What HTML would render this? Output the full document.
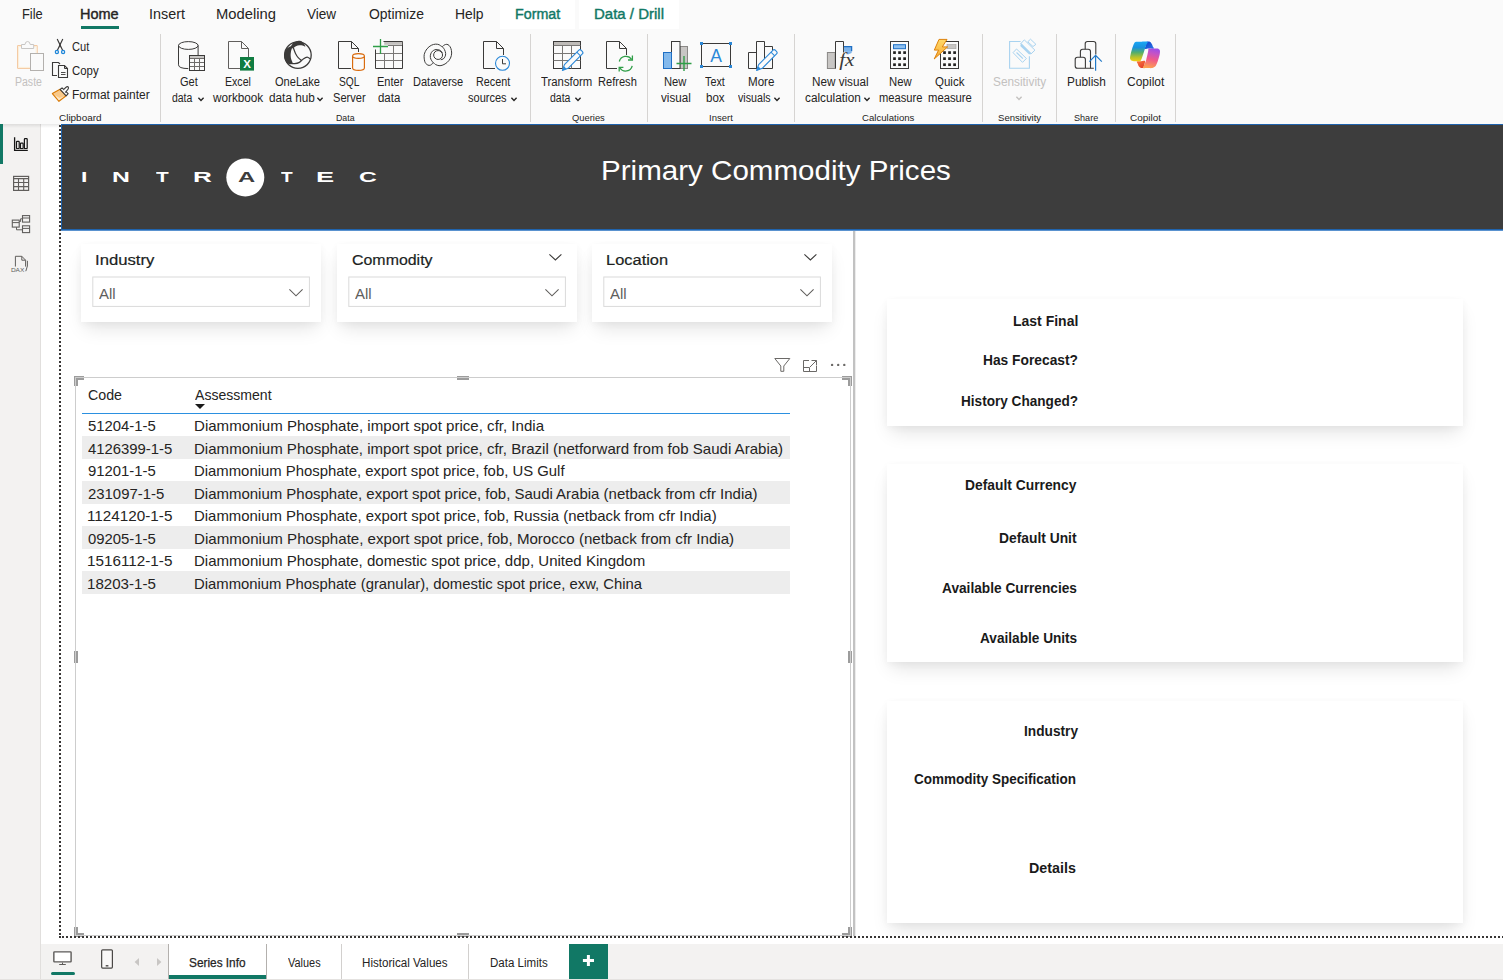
<!DOCTYPE html>
<html lang="en"><head><meta charset="utf-8"><title>Primary Commodity Prices - Power BI Desktop</title>
<style>
html,body{margin:0;padding:0}
body{width:1503px;height:980px;position:relative;overflow:hidden;background:#fff;font-family:"Liberation Sans",sans-serif;color:#252423}
.a{position:absolute}
.t{position:absolute;white-space:pre;line-height:1;transform-origin:0 50%;color:#252423}
svg{position:absolute;overflow:visible}
.sep{position:absolute;width:1px;top:34px;height:88px;background:#d6d4d2}
.card{position:absolute;background:#fff;box-shadow:0 10px 18px -4px rgba(0,0,0,.115),0 2px 8px rgba(0,0,0,.04)}
.dd{position:absolute;border:1px solid #e4e4e4;background:#fff;box-sizing:border-box}
.row{position:absolute;left:82px;width:708px;height:22px;background:#ededed}
.h{position:absolute;background:#a6a6a6}
</style></head><body>
<div class="a" style="left:0;top:0;width:1503px;height:124px;background:#fafafa"></div>
<div class="a" style="left:500px;top:0;width:75px;height:29px;background:#fff"></div>
<div class="a" style="left:579px;top:0;width:100px;height:29px;background:#fff"></div>
<div class="a" style="left:81px;top:26px;width:38px;height:3px;background:#117865"></div>
<div class="a" style="left:0;top:124px;width:41px;height:856px;background:#f3f2f1;border-right:1px solid #e1dfdd;box-sizing:border-box"></div>
<div class="a" style="left:0;top:124px;width:60px;height:4px;background:linear-gradient(rgba(0,0,0,.09),rgba(0,0,0,0))"></div>
<div class="a" style="left:0;top:124px;width:3px;height:40px;background:#117865"></div>
<div class="a" style="left:41px;top:944px;width:1462px;height:36px;background:#f3f2f1"></div>
<div class="a" style="left:0;top:979px;width:1503px;height:1px;background:#e4e2e0"></div>
<div class="a" style="left:61px;top:124px;width:1442px;height:106px;background:#3d3d3d;border:1px solid #1f63ad;border-right:0;box-sizing:border-box"></div>
<div class="a" style="left:61px;top:230px;width:1442px;height:1px;background:#5a92cf"></div>
<div class="a" style="left:853px;top:231px;width:2px;height:705px;background:#c2c2c2;border-right:1px solid #ececec"></div>
<span class="t" style="left:22.08px;top:7.15px;font-size:14px;transform:scaleX(0.9186);">File</span>
<span class="t" style="left:80.37px;top:7.15px;font-size:14px;transform:scaleX(1.0340);-webkit-text-stroke:.4px;">Home</span>
<span class="t" style="left:148.97px;top:7.15px;font-size:14px;transform:scaleX(1.0257);">Insert</span>
<span class="t" style="left:215.95px;top:7.15px;font-size:14px;transform:scaleX(1.0540);">Modeling</span>
<span class="t" style="left:307.00px;top:7.15px;font-size:14px;transform:scaleX(0.9683);">View</span>
<span class="t" style="left:368.70px;top:7.15px;font-size:14px;transform:scaleX(0.9937);">Optimize</span>
<span class="t" style="left:455.41px;top:7.15px;font-size:14px;transform:scaleX(0.9926);">Help</span>
<span class="t" style="left:514.58px;top:7.15px;font-size:14px;transform:scaleX(1.0196);color:#117865;-webkit-text-stroke:.4px #117865;">Format</span>
<span class="t" style="left:593.53px;top:7.15px;font-size:14px;transform:scaleX(1.0711);color:#117865;-webkit-text-stroke:.4px #117865;">Data / Drill</span>
<div class="sep" style="left:160px"></div><div class="sep" style="left:530px"></div><div class="sep" style="left:647px"></div><div class="sep" style="left:794px"></div><div class="sep" style="left:982px"></div><div class="sep" style="left:1056px"></div><div class="sep" style="left:1115px"></div><div class="sep" style="left:1175px"></div><span class="t" style="left:14.70px;top:75.84px;font-size:12px;transform:scaleX(0.8771);color:#c3c1bf;">Paste</span>
<span class="t" style="left:72.40px;top:40.84px;font-size:12px;transform:scaleX(0.9256);">Cut</span>
<span class="t" style="left:72.40px;top:64.84px;font-size:12px;transform:scaleX(0.9495);">Copy</span>
<span class="t" style="left:72.40px;top:88.84px;font-size:12px;transform:scaleX(0.9957);">Format painter</span>
<span class="t" style="left:58.80px;top:113.04px;font-size:9.4px;transform:scaleX(1.0598);">Clipboard</span>
<span class="t" style="left:180.20px;top:75.84px;font-size:12px;transform:scaleX(0.9196);">Get</span>
<span class="t" style="left:172.00px;top:91.84px;font-size:12px;transform:scaleX(0.8699);">data</span>
<span class="t" style="left:225.20px;top:75.84px;font-size:12px;transform:scaleX(0.8822);">Excel</span>
<span class="t" style="left:212.58px;top:91.84px;font-size:12px;transform:scaleX(0.9783);">workbook</span>
<span class="t" style="left:275.00px;top:75.84px;font-size:12px;transform:scaleX(0.9239);">OneLake</span>
<span class="t" style="left:268.80px;top:91.84px;font-size:12px;transform:scaleX(0.9822);">data hub</span>
<span class="t" style="left:339.30px;top:75.84px;font-size:12px;transform:scaleX(0.8505);">SQL</span>
<span class="t" style="left:333.30px;top:91.84px;font-size:12px;transform:scaleX(0.9223);">Server</span>
<span class="t" style="left:376.60px;top:75.84px;font-size:12px;transform:scaleX(0.9168);">Enter</span>
<span class="t" style="left:377.90px;top:91.84px;font-size:12px;transform:scaleX(0.9543);">data</span>
<span class="t" style="left:412.50px;top:75.84px;font-size:12px;transform:scaleX(0.9179);">Dataverse</span>
<span class="t" style="left:476.40px;top:75.84px;font-size:12px;transform:scaleX(0.8995);">Recent</span>
<span class="t" style="left:468.40px;top:91.84px;font-size:12px;transform:scaleX(0.9187);">sources</span>
<span class="t" style="left:336.00px;top:113.04px;font-size:9.4px;transform:scaleX(0.9374);">Data</span>
<span class="t" style="left:541.40px;top:75.84px;font-size:12px;transform:scaleX(0.9459);">Transform</span>
<span class="t" style="left:549.80px;top:91.84px;font-size:12px;transform:scaleX(0.8741);">data</span>
<span class="t" style="left:598.20px;top:75.84px;font-size:12px;transform:scaleX(0.9240);">Refresh</span>
<span class="t" style="left:572.20px;top:113.04px;font-size:9.4px;transform:scaleX(0.9988);">Queries</span>
<span class="t" style="left:664.40px;top:75.84px;font-size:12px;transform:scaleX(0.9326);">New</span>
<span class="t" style="left:661.00px;top:91.84px;font-size:12px;transform:scaleX(0.9696);">visual</span>
<span class="t" style="left:705.40px;top:75.84px;font-size:12px;transform:scaleX(0.8997);">Text</span>
<span class="t" style="left:706.30px;top:91.84px;font-size:12px;transform:scaleX(0.9614);">box</span>
<span class="t" style="left:747.60px;top:75.84px;font-size:12px;transform:scaleX(0.9651);">More</span>
<span class="t" style="left:738.00px;top:91.84px;font-size:12px;transform:scaleX(0.8888);">visuals</span>
<span class="t" style="left:708.70px;top:113.04px;font-size:9.4px;transform:scaleX(1.0150);">Insert</span>
<span class="t" style="left:811.80px;top:75.84px;font-size:12px;transform:scaleX(0.9747);">New visual</span>
<span class="t" style="left:805.40px;top:91.84px;font-size:12px;transform:scaleX(0.9834);">calculation</span>
<span class="t" style="left:889.00px;top:75.84px;font-size:12px;transform:scaleX(0.9408);">New</span>
<span class="t" style="left:878.60px;top:91.84px;font-size:12px;transform:scaleX(0.9295);">measure</span>
<span class="t" style="left:934.50px;top:75.84px;font-size:12px;transform:scaleX(0.9598);">Quick</span>
<span class="t" style="left:927.60px;top:91.84px;font-size:12px;transform:scaleX(0.9402);">measure</span>
<span class="t" style="left:861.90px;top:113.04px;font-size:9.4px;transform:scaleX(1.0257);">Calculations</span>
<span class="t" style="left:992.80px;top:75.84px;font-size:12px;transform:scaleX(0.9849);color:#c3c1bf;">Sensitivity</span>
<span class="t" style="left:998.10px;top:113.04px;font-size:9.4px;transform:scaleX(1.0208);">Sensitivity</span>
<span class="t" style="left:1067.30px;top:75.84px;font-size:12px;transform:scaleX(0.9849);">Publish</span>
<span class="t" style="left:1074.20px;top:113.04px;font-size:9.4px;transform:scaleX(0.9676);">Share</span>
<span class="t" style="left:1126.70px;top:75.84px;font-size:12px;transform:scaleX(0.9995);">Copilot</span>
<span class="t" style="left:1129.90px;top:113.04px;font-size:9.4px;transform:scaleX(1.0616);">Copilot</span>
<svg style="left:197.6px;top:96.5px" width="6" height="4.4" viewBox="0 0 6 4.4" ><path d="M0.4 0.7L3 3.5L5.6 0.7" fill="none" stroke="#252423" stroke-width="1.35"/></svg>
<svg style="left:317.4px;top:96.5px" width="6" height="4.4" viewBox="0 0 6 4.4" ><path d="M0.4 0.7L3 3.5L5.6 0.7" fill="none" stroke="#252423" stroke-width="1.35"/></svg>
<svg style="left:510.70000000000005px;top:96.5px" width="6" height="4.4" viewBox="0 0 6 4.4" ><path d="M0.4 0.7L3 3.5L5.6 0.7" fill="none" stroke="#252423" stroke-width="1.35"/></svg>
<svg style="left:575.3px;top:96.5px" width="6" height="4.4" viewBox="0 0 6 4.4" ><path d="M0.4 0.7L3 3.5L5.6 0.7" fill="none" stroke="#252423" stroke-width="1.35"/></svg>
<svg style="left:774px;top:96.5px" width="6" height="4.4" viewBox="0 0 6 4.4" ><path d="M0.4 0.7L3 3.5L5.6 0.7" fill="none" stroke="#252423" stroke-width="1.35"/></svg>
<svg style="left:864px;top:96.5px" width="6" height="4.4" viewBox="0 0 6 4.4" ><path d="M0.4 0.7L3 3.5L5.6 0.7" fill="none" stroke="#252423" stroke-width="1.35"/></svg>
<svg style="left:1016.4px;top:96.0px" width="6" height="4.4" viewBox="0 0 6 4.4" ><path d="M0.4 0.7L3 3.5L5.6 0.7" fill="none" stroke="#c3c1bf" stroke-width="1.35"/></svg>
<svg style="left:0;top:0" width="1503" height="124" viewBox="0 0 1503 124"><path d="M21.5 45.6H17.6V68.4H30" fill="none" stroke="#f3c59b" stroke-width="1"/><path d="M34 45.6H37.2V53" fill="none" stroke="#f3c59b" stroke-width="1"/><path d="M21.5 46.6H18.6V67.4H30" fill="none" stroke="#fcefd8" stroke-width="1"/><path d="M34 46.6H36.2V53" fill="none" stroke="#fcefd8" stroke-width="1"/><path d="M21.5 48.5V44.5H25Q25.2 41.5 27.6 41.5Q30 41.5 30.2 44.5H33.7V48.5Z" fill="#fafafa" stroke="#c8c6c4" stroke-width="1"/><rect x="30.5" y="53.5" width="13" height="17" fill="#fafafa" stroke="#b3b0ad" stroke-width="1"/><path d="M57.2 39L62.6 50.3M62.8 39L57.4 50.3" stroke="#3b3a39" stroke-width="1.15" fill="none"/><path d="M59.2 43.6L60 42.4L60.8 43.6L60.6 47L60 47.6L59.4 47Z" fill="#3b3a39"/><circle cx="56.9" cy="52" r="1.55" fill="none" stroke="#1e86d8" stroke-width="1.3"/><circle cx="63.1" cy="52" r="1.55" fill="none" stroke="#1e86d8" stroke-width="1.3"/><path d="M57 75.5H52.5V62.5H58.5L60 64" fill="none" stroke="#3b3a39" stroke-width="1.1"/><path d="M58.5 65.5H64.5L67.5 68.5V77.5H58.5Z" fill="none" stroke="#3b3a39" stroke-width="1.1"/><path d="M64.5 65.5V68.5H67.5" fill="none" stroke="#3b3a39" stroke-width="1"/><path d="M61 72.5H65.5M61 74.5H65.5" stroke="#3b3a39" stroke-width=".9"/><path d="M52.35 93.58L60.06 89.32L66.16 95.78L58.96 101.30Z" fill="#f9c98a" stroke="#d97a06" stroke-width="1.1" stroke-linejoin="round"/><path d="M54.92 95.20L58.96 100.19L64.25 96.37L59.70 97.99Z" fill="#fde7c4"/><path d="M60.06 89.32L62.05 87.85L68.14 93.58L66.16 95.78Z" fill="#fafafa" stroke="#3b3a39" stroke-width="1.1" stroke-linejoin="round"/><path d="M63.37 89.76C63.93 89.27 65.93 87.26 66.75 86.82C67.57 86.38 68.06 86.75 68.29 87.11C68.52 87.48 68.66 88.13 68.14 89.02C67.63 89.92 65.70 91.90 65.21 92.48" fill="#fafafa" stroke="#3b3a39" stroke-width="1.1"/><path d="M178.5 45.5V64.8Q178.5 68.5 188.3 68.6M198.1 45.5V55" fill="none" stroke="#3b3a39" stroke-width="1"/><ellipse cx="188.3" cy="45.5" rx="9.8" ry="3.9" fill="none" stroke="#3b3a39" stroke-width="1"/><rect x="189.5" y="55.5" width="15" height="15" fill="#fafafa" stroke="#3b3a39" stroke-width="1"/><rect x="190" y="56" width="14" height="2" fill="#c8c6c4"/><path d="M190 58.5H204M190 62.5H204M190 66.5H204M194.5 58.5V70M199.5 58.5V70" stroke="#6e6c6a" stroke-width="1"/><path d="M228.5 41.5H241.5L248.5 48.5V68.5H228.5Z" fill="none" stroke="#605e5c" stroke-width="1"/><path d="M241.5 41.5V48.5H248.5" fill="none" stroke="#605e5c" stroke-width="1"/><rect x="240" y="57" width="14" height="13.6" fill="#107c41"/><text x="247" y="68" font-family="Liberation Sans, sans-serif" font-size="11.5" font-weight="700" fill="#fff" text-anchor="middle">X</text><circle cx="297.9" cy="55.1" r="13.3" fill="none" stroke="#3b3a39" stroke-width="1.3"/><path d="M290.92 46.16C289.97 46.39 287.51 47.46 286.38 48.99C285.26 50.53 284.27 53.29 284.17 55.39C284.07 57.50 284.98 60.17 285.80 61.60C286.62 63.04 287.97 63.72 289.10 64.01C290.23 64.30 292.23 64.14 292.59 63.35C292.94 62.56 291.55 60.60 291.23 59.27C290.91 57.95 290.66 56.82 290.65 55.39C290.64 53.97 290.91 52.03 291.15 50.74C291.39 49.45 292.12 48.40 292.08 47.64C292.05 46.87 291.87 45.94 290.92 46.16Z" fill="#3b3a39"/><path d="M290.92 46.40C291.15 45.44 292.67 43.53 293.95 42.59C295.23 41.66 297.28 41.00 298.60 40.81C299.93 40.62 300.77 40.50 301.90 41.43C303.03 42.36 305.29 45.71 305.39 46.40C305.49 47.08 303.48 45.72 302.48 45.54C301.48 45.36 300.48 45.21 299.38 45.31C298.28 45.41 297.02 45.66 295.89 46.16C294.75 46.67 293.42 48.30 292.59 48.34C291.76 48.37 290.69 47.35 290.92 46.40Z" fill="#3b3a39"/><path d="M293.36 47.83C293.72 48.77 294.69 51.81 295.50 53.46C296.31 55.10 297.21 56.55 298.21 57.72C299.22 58.90 300.96 60.05 301.51 60.52" fill="none" stroke="#3b3a39" stroke-width="1.2"/><path d="M288.52 63.15C289.55 63.24 292.91 63.83 294.72 63.70C296.53 63.57 297.95 63.17 299.38 62.38C300.80 61.59 301.96 59.84 303.26 58.96C304.55 58.09 305.96 57.14 307.13 57.14C308.31 57.14 309.79 58.66 310.32 58.96" fill="none" stroke="#3b3a39" stroke-width="1.2"/><path d="M351 68.5H338.5V41.5H351.5L358.5 48.5V52" fill="none" stroke="#3b3a39" stroke-width="1"/><path d="M351.5 41.5V48.5H358.5" fill="none" stroke="#3b3a39" stroke-width="1"/><path d="M352.6 56V68Q352.6 70.4 358.5 70.4Q364.4 70.4 364.4 68V56" fill="#fafafa" stroke="#d9690a" stroke-width="1.15"/><ellipse cx="358.5" cy="56" rx="5.9" ry="2.4" fill="#fafafa" stroke="#d9690a" stroke-width="1.15"/><path d="M388 45.5H402M376 53.5H402M376 60.5H402M384.5 53.5V68M393.5 45.5V68" stroke="#797775" stroke-width="1"/><path d="M383.5 41.5H402.5V68.5H375.5V49.5" fill="none" stroke="#3b3a39" stroke-width="1"/><rect x="384.2" y="42" width="18" height="2.8" fill="#c3c1bf"/><path d="M380.5 39V54M373 46.5H388" stroke="#2f9e47" stroke-width="1.3"/><path d="M442.15 46.55C441.28 46.51 440.15 45.13 439.05 44.73C437.95 44.33 436.85 44.05 435.56 44.15C434.27 44.24 432.71 44.53 431.29 45.31C429.87 46.09 428.20 47.25 427.02 48.80C425.85 50.35 424.62 52.55 424.23 54.62C423.84 56.69 424.30 59.60 424.70 61.21C425.10 62.83 425.89 63.62 426.64 64.32C427.38 65.01 428.35 65.35 429.16 65.40C429.97 65.45 430.81 65.07 431.49 64.63C432.16 64.19 432.55 62.78 433.23 62.76C433.91 62.75 434.59 64.03 435.56 64.51C436.53 65.00 437.82 65.59 439.05 65.67C440.28 65.76 441.57 65.56 442.93 65.01C444.29 64.47 445.93 63.53 447.20 62.38C448.46 61.23 449.75 59.66 450.49 58.11C451.24 56.56 451.59 54.68 451.66 53.07C451.72 51.45 451.30 49.67 450.88 48.41C450.46 47.15 449.81 46.18 449.13 45.50C448.46 44.82 447.62 44.42 446.81 44.34C446.00 44.26 445.06 44.63 444.29 45.00C443.51 45.37 443.03 46.60 442.15 46.55Z" fill="none" stroke="#3b3a39" stroke-width="1"/><circle cx="438.1" cy="55" r="4.45" fill="none" stroke="#3b3a39" stroke-width="1"/><path d="M433.23 62.76C432.84 62.18 431.39 60.44 430.90 59.27C430.42 58.11 430.22 56.95 430.32 55.78C430.42 54.62 430.94 53.20 431.49 52.29C432.04 51.39 432.84 50.82 433.62 50.35C434.39 49.89 435.30 49.60 436.14 49.50C436.98 49.40 437.89 49.53 438.66 49.77C439.44 50.01 440.18 50.38 440.80 50.93C441.41 51.48 442.09 52.71 442.35 53.07" fill="none" stroke="#3b3a39" stroke-width="1"/><path d="M442.15 46.55C442.54 47.06 443.90 48.43 444.48 49.58C445.06 50.73 445.55 52.29 445.64 53.46C445.74 54.62 445.45 55.65 445.06 56.56C444.67 57.46 444.03 58.36 443.32 58.89C442.61 59.42 441.22 59.60 440.80 59.74" fill="none" stroke="#3b3a39" stroke-width="1"/><path d="M495 68.5H483.5V41.5H496.5L503.5 48.5V55" fill="none" stroke="#3b3a39" stroke-width="1"/><path d="M496.5 41.5V48.5H503.5" fill="none" stroke="#3b3a39" stroke-width="1"/><circle cx="502.5" cy="63.3" r="7" fill="#fafafa" stroke="#2b88d8" stroke-width="1.1"/><path d="M502.5 59V63.8H506" fill="none" stroke="#3b3a39" stroke-width="1"/><rect x="553.5" y="41.5" width="27" height="27" fill="none" stroke="#3b3a39" stroke-width="1"/><rect x="554" y="42" width="26" height="3" fill="#bebbb8"/><path d="M553.5 45.5H580.5M553.5 53.5H580.5M553.5 60.5H580.5M562.5 45.5V68.5M571.5 45.5V68.5" stroke="#797775" stroke-width="1"/><g transform="translate(562.4 70.4) rotate(-45.3)"><path d="M0 0L5.5 -2.6H26.07752708275344Q27.57752708275344 -2.6 27.57752708275344 0Q27.57752708275344 2.6 26.07752708275344 2.6H5.5Z" fill="#fafafa" stroke="#2b88d8" stroke-width="1.1" stroke-linejoin="round"/><path d="M0 0L4 -1.8V1.8Z" fill="#2b88d8"/><path d="M23.07752708275344 -2.6V2.6" stroke="#2b88d8" stroke-width="1"/></g><path d="M617 68.5H606.5V41.5H619.5L626.5 48.5V55" fill="none" stroke="#3b3a39" stroke-width="1"/><path d="M619.5 41.5V48.5H626.5" fill="none" stroke="#3b3a39" stroke-width="1"/><path d="M619.3 61.5A6.8 6.8 0 0 1 631.6 59.4M632.2 65.8A6.8 6.8 0 0 1 619.9 68" fill="none" stroke="#2f9e47" stroke-width="1.3"/><path d="M632.4 55.6V60H628M619.2 71.6V67.4H623.4" fill="none" stroke="#2f9e47" stroke-width="1.3"/><rect x="680" y="46.5" width="7.5" height="22" fill="#c8c6c4" stroke="#8a8886" stroke-width="1"/><rect x="671.5" y="41.5" width="8.5" height="27" fill="#fafafa" stroke="#3b3a39" stroke-width="1"/><rect x="663.5" y="52.5" width="8" height="16" fill="#83b9ec" stroke="#1f6fc4" stroke-width="1"/><path d="M684 56V71M676.5 63.5H691.5" stroke="#2f9e47" stroke-width="1.4"/><rect x="701.5" y="43.5" width="29" height="23" fill="none" stroke="#3b3a39" stroke-width="1"/><rect x="700.0" y="42.0" width="3" height="3" fill="#2b88d8"/><rect x="729.0" y="42.0" width="3" height="3" fill="#2b88d8"/><rect x="700.0" y="65.0" width="3" height="3" fill="#2b88d8"/><rect x="729.0" y="65.0" width="3" height="3" fill="#2b88d8"/><text x="716" y="62" font-family="Liberation Sans, sans-serif" font-size="17.5" fill="#2b88d8" text-anchor="middle">A</text><path d="M748.5 68.5V52.5H756.5M756.5 68.5V41.5H764.5V46.5H772.5V68.5H748.5" fill="none" stroke="#3b3a39" stroke-width="1"/><path d="M764.5 46.5V60" stroke="#3b3a39" stroke-width="1"/><g transform="translate(756.6 70.4) rotate(-45.3)"><path d="M0 0L5.5 -2.6H26.07752708275344Q27.57752708275344 -2.6 27.57752708275344 0Q27.57752708275344 2.6 26.07752708275344 2.6H5.5Z" fill="#fafafa" stroke="#2b88d8" stroke-width="1.1" stroke-linejoin="round"/><path d="M0 0L4 -1.8V1.8Z" fill="#2b88d8"/><path d="M23.07752708275344 -2.6V2.6" stroke="#2b88d8" stroke-width="1"/></g><rect x="827.4" y="52.5" width="7.8" height="16" fill="#c8c6c4" stroke="#8a8886" stroke-width="1"/><path d="M835.5 68.5V41.5H843.5V52.5" fill="none" stroke="#3b3a39" stroke-width="1"/><path d="M843.9 46.5H851.6V51.5H843.9Z" fill="#7db3ea"/><path d="M843.9 46.7H851.6V51.2" fill="none" stroke="#1f6fc4" stroke-width="1.3"/><path d="M843.9 51.2Q846 51.4 848 54.5L851.6 53V51.2Z" fill="#7db3ea"/><text x="839.2" y="66" font-family="Liberation Serif, serif" font-style="italic" font-size="19.5" fill="#3b3a39" textLength="15.4" lengthAdjust="spacingAndGlyphs">fx</text><rect x="890.5" y="41.5" width="18" height="27" fill="#fafafa" stroke="#3b3a39" stroke-width="1"/><rect x="893.5" y="44.7" width="12" height="4" fill="#8ec0f0" stroke="#1f6fc4" stroke-width="1"/><rect x="893.15" y="51.25" width="2.7" height="2.7" fill="#201f1e"/><rect x="898.20" y="51.25" width="2.7" height="2.7" fill="#201f1e"/><rect x="903.25" y="51.25" width="2.7" height="2.7" fill="#201f1e"/><rect x="893.15" y="57.30" width="2.7" height="2.7" fill="#201f1e"/><rect x="898.20" y="57.30" width="2.7" height="2.7" fill="#201f1e"/><rect x="903.25" y="57.30" width="2.7" height="2.7" fill="#201f1e"/><rect x="893.15" y="63.35" width="2.7" height="2.7" fill="#201f1e"/><rect x="898.20" y="63.35" width="2.7" height="2.7" fill="#201f1e"/><rect x="903.25" y="63.35" width="2.7" height="2.7" fill="#201f1e"/><rect x="940.5" y="41.5" width="18" height="27" fill="#fafafa" stroke="#3b3a39" stroke-width="1"/><rect x="947.0" y="44.5" width="9" height="4.2" fill="#c8c6c4" stroke="#a19f9d" stroke-width=".6"/><rect x="943.15" y="51.25" width="2.7" height="2.7" fill="#201f1e"/><rect x="948.20" y="51.25" width="2.7" height="2.7" fill="#201f1e"/><rect x="953.25" y="51.25" width="2.7" height="2.7" fill="#201f1e"/><rect x="943.15" y="57.30" width="2.7" height="2.7" fill="#201f1e"/><rect x="948.20" y="57.30" width="2.7" height="2.7" fill="#201f1e"/><rect x="953.25" y="57.30" width="2.7" height="2.7" fill="#201f1e"/><rect x="943.15" y="63.35" width="2.7" height="2.7" fill="#201f1e"/><rect x="948.20" y="63.35" width="2.7" height="2.7" fill="#201f1e"/><rect x="953.25" y="63.35" width="2.7" height="2.7" fill="#201f1e"/><defs><linearGradient id="lg" x1="0" y1="0" x2="0" y2="1"><stop offset="0" stop-color="#ffd968"/><stop offset="1" stop-color="#f7a935"/></linearGradient></defs><path d="M939 39.4H947L942.3 46.9H947.6L934.2 59L938.6 50.1H934.3Z" fill="url(#lg)" stroke="#dd820c" stroke-width="1" stroke-linejoin="round"/><path d="M1020.6 41.5H1009.6V68.2H1029.4V56.2" fill="none" stroke="#a9d3f0" stroke-width="1.1"/><path d="M1016.53 48.98L1026.42 58.48L1022.54 62.36L1013.05 52.67Z" fill="none" stroke="#a9d3f0" stroke-width="1"/><path d="M1016.53 52.47L1022.93 58.67" stroke="#a9d3f0" stroke-width="1.2"/><path d="M1024.29 39.88L1034.95 50.15L1030.88 54.02L1020.53 43.95Z" fill="#fafafa" stroke="#a9d3f0" stroke-width="1"/><path d="M1021.38 43.36L1031.46 53.25L1029.13 54.60L1020.22 45.88Z" fill="#a9d3f0"/><path d="M1030.49 39.18L1035.91 44.33L1033.01 46.54L1027.78 41.81Z" fill="#fafafa" stroke="#a9d3f0" stroke-width="1"/><path d="M1085.2 49.3V43.8Q1085.2 41.5 1087.5 41.5H1093.5Q1095.8 41.5 1095.8 43.8V54.5" fill="none" stroke="#3b3a39" stroke-width="1.1"/><path d="M1080.4 57.2V51.6Q1080.4 49.3 1082.7 49.3H1088.2Q1090.5 49.3 1090.5 51.6V68.3" fill="none" stroke="#3b3a39" stroke-width="1.1"/><path d="M1093.8 68.3H1077.5Q1075.2 68.3 1075.2 66V59.5Q1075.2 57.2 1077.5 57.2H1083.1Q1085.4 57.2 1085.4 59.5V68.3" fill="none" stroke="#3b3a39" stroke-width="1.1"/><path d="M1095.6 70.8V55.8M1089.4 61.6L1095.6 55.4L1101.8 61.6" fill="none" stroke="#2179c7" stroke-width="1.2"/><defs><linearGradient id="cg1" x1="0" y1="0" x2="0" y2="1"><stop offset="0" stop-color="#19a6f5"/><stop offset=".3" stop-color="#1992dd"/><stop offset=".55" stop-color="#52ad6e"/><stop offset=".8" stop-color="#b9c22c"/><stop offset="1" stop-color="#f2cf14"/></linearGradient><linearGradient id="cg2" x1=".6" y1="0" x2=".4" y2="1"><stop offset="0" stop-color="#9f4ee8"/><stop offset=".25" stop-color="#c653c4"/><stop offset=".55" stop-color="#f05a8a"/><stop offset="1" stop-color="#fda24e"/></linearGradient><linearGradient id="cg3" x1="0" y1="0" x2="1" y2="1"><stop offset="0" stop-color="#0a3fd0"/><stop offset="1" stop-color="#2d78e4"/></linearGradient><linearGradient id="cg4" x1="0" y1="0" x2=".6" y2="1"><stop offset="0" stop-color="#fb7a3c"/><stop offset="1" stop-color="#e2412c"/></linearGradient></defs><path d="M1146.71 41.81C1147.20 41.44 1149.60 41.64 1150.19 41.89C1150.79 42.14 1151.50 43.39 1151.82 43.95C1152.15 44.50 1152.73 46.12 1152.98 46.66C1153.24 47.20 1154.50 48.38 1153.99 48.60C1153.49 48.81 1149.71 48.45 1148.64 48.48C1147.58 48.51 1145.16 49.26 1144.84 48.87C1144.53 48.47 1145.71 45.93 1145.93 45.11C1146.15 44.29 1146.21 42.19 1146.71 41.81Z" fill="url(#cg3)"/><path d="M1136.82 61.39C1137.26 61.14 1140.33 61.24 1141.28 61.19C1142.23 61.15 1144.60 60.59 1144.96 61.00C1145.32 61.41 1144.59 63.88 1144.38 64.68C1144.17 65.48 1143.59 67.49 1143.14 67.86C1142.69 68.23 1141.03 68.07 1140.50 67.86C1139.98 67.65 1139.00 66.57 1138.64 66.04C1138.29 65.51 1137.69 63.87 1137.48 63.33C1137.27 62.78 1136.38 61.64 1136.82 61.39Z" fill="url(#cg4)"/><path d="M1136.05 41.74C1136.91 41.57 1140.31 41.73 1141.67 41.74C1143.02 41.75 1147.14 41.42 1147.67 41.81C1148.21 42.21 1146.66 43.98 1146.24 45.11C1145.82 46.24 1144.57 50.03 1144.07 51.50C1143.57 52.97 1142.42 56.61 1141.98 57.71C1141.54 58.80 1141.14 60.47 1140.31 60.88C1139.48 61.30 1135.92 61.32 1134.88 61.27C1133.84 61.23 1131.96 60.86 1131.40 60.50C1130.83 60.13 1130.11 58.99 1130.04 58.17C1129.97 57.35 1130.50 54.76 1130.81 53.44C1131.13 52.12 1132.35 48.05 1132.75 46.85C1133.15 45.65 1133.84 43.77 1134.22 43.17C1134.61 42.57 1135.18 41.90 1136.05 41.74Z" fill="url(#cg1)"/><path d="M1148.72 48.60C1149.31 48.33 1152.24 48.48 1153.29 48.48C1154.35 48.48 1156.98 48.37 1157.75 48.60C1158.52 48.82 1159.65 49.76 1159.88 50.42C1160.11 51.07 1159.98 52.96 1159.73 54.22C1159.48 55.47 1158.25 59.78 1157.75 61.19C1157.25 62.60 1156.06 65.51 1155.43 66.31C1154.79 67.11 1153.25 67.89 1152.33 68.09C1151.40 68.30 1148.57 68.10 1147.48 68.09C1146.40 68.08 1143.39 68.40 1143.02 68.02C1142.65 67.63 1143.96 65.60 1144.30 64.76C1144.64 63.92 1145.56 61.99 1145.93 60.81C1146.30 59.62 1147.21 55.78 1147.48 54.60C1147.75 53.43 1148.11 51.43 1148.26 50.73C1148.40 50.03 1148.13 48.86 1148.72 48.60Z" fill="url(#cg2)"/></svg>
<svg style="left:0;top:0" width="60" height="300" viewBox="0 0 60 300"><path d="M14.6 137.2V150.4H27.8" fill="none" stroke="#161616" stroke-width="1.3"/><rect x="16.5" y="141.3" width="2.7" height="7.2" rx=".6" fill="none" stroke="#161616" stroke-width="1.2"/><rect x="20.45" y="143.1" width="2.7" height="5.4" rx=".6" fill="none" stroke="#161616" stroke-width="1.2"/><rect x="24.4" y="138.6" width="2.8" height="9.9" rx=".6" fill="none" stroke="#161616" stroke-width="1.2"/><rect x="13.6" y="176.4" width="15" height="14" fill="none" stroke="#605e5c" stroke-width="1.2"/><path d="M13.6 178.6H28.6M13.6 182.5H28.6M13.6 186.6H28.6M18.5 178.6V190.4M23.7 178.6V190.4" stroke="#605e5c" stroke-width="1.1"/><rect x="12.3" y="220.1" width="6.9" height="7" fill="none" stroke="#605e5c" stroke-width="1.1"/><rect x="22.5" y="215.6" width="7.1" height="6.5" fill="none" stroke="#605e5c" stroke-width="1.1"/><rect x="22.5" y="225.8" width="7.1" height="6.8" fill="none" stroke="#605e5c" stroke-width="1.1"/><path d="M12.3 222.6H19.2M22.5 218H29.6M22.5 228.4H29.6" stroke="#605e5c" stroke-width="1"/><path d="M19.2 221.5H20.6V218.8H22.5M16.5 227.1V229.8H22.5" fill="none" stroke="#605e5c" stroke-width="1"/><path d="M15.4 266.6V256.3H21.8L25.6 260.2V266.6" fill="none" stroke="#605e5c" stroke-width="1"/><path d="M21.8 256.3V260.2H25.6" fill="none" stroke="#605e5c" stroke-width="1"/><path d="M27.4 260.8Q28.2 266 25.8 271.2" fill="none" stroke="#605e5c" stroke-width="1"/><rect x="10.5" y="266.9" width="14.3" height="5.4" fill="#f3f2f1"/><text x="10.9" y="271.8" font-family="Liberation Sans, sans-serif" font-size="6.2" fill="#605e5c" textLength="13.4" lengthAdjust="spacingAndGlyphs">DAX</text></svg>
<svg style="left:0;top:0" width="420" height="230" viewBox="0 0 420 230"><circle cx="245.3" cy="177.5" r="19" fill="#fff"/></svg>
<span class="t" style="left:80.50px;top:169.46px;font-size:15.4px;transform:scaleX(1.5000);font-weight:700;color:#fff;">I</span>
<span class="t" style="left:111.99px;top:169.46px;font-size:15.4px;transform:scaleX(1.6100);font-weight:700;color:#fff;">N</span>
<span class="t" style="left:156.20px;top:169.46px;font-size:15.4px;transform:scaleX(1.3500);font-weight:700;color:#fff;">T</span>
<span class="t" style="left:192.90px;top:169.46px;font-size:15.4px;transform:scaleX(1.7000);font-weight:700;color:#fff;">R</span>
<span class="t" style="left:237.60px;top:169.46px;font-size:15.4px;transform:scaleX(1.5455);font-weight:700;color:#3d3d3d;">A</span>
<span class="t" style="left:280.60px;top:169.46px;font-size:15.4px;transform:scaleX(1.2400);font-weight:700;color:#fff;">T</span>
<span class="t" style="left:316.13px;top:169.46px;font-size:15.4px;transform:scaleX(1.7667);font-weight:700;color:#fff;">E</span>
<span class="t" style="left:359.10px;top:169.46px;font-size:15.4px;transform:scaleX(1.6000);font-weight:700;color:#fff;">C</span>
<span class="t" style="left:600.69px;top:157.30px;font-size:28px;transform:scaleX(1.0558);color:#fff;">Primary Commodity Prices</span>
<div class="card" style="left:81px;top:244px;width:240px;height:78px"></div><svg style="left:0;top:0" width="900" height="320" viewBox="0 0 900 320"><rect x="92.8" y="277" width="216.6" height="29.4" fill="#fff" stroke="#dadada" stroke-width="1"/></svg><span class="t" style="left:95.32px;top:252.18px;font-size:15.5px;transform:scaleX(1.0775);color:#201f1e;-webkit-text-stroke:.2px #201f1e;">Industry</span>
<span class="t" style="left:99.20px;top:286.30px;font-size:15px;transform:scaleX(0.9977);color:#605e5c;">All</span>
<svg style="left:288.5px;top:288.5px" width="14" height="7.4" viewBox="0 0 14 7.4" ><path d="M0.4 0.4L7.0 6.800000000000001L13.6 0.4" fill="none" stroke="#605e5c" stroke-width="1.1"/></svg>
<div class="card" style="left:337px;top:244px;width:240px;height:78px"></div><svg style="left:0;top:0" width="900" height="320" viewBox="0 0 900 320"><rect x="348.8" y="277" width="216.6" height="29.4" fill="#fff" stroke="#dadada" stroke-width="1"/></svg><span class="t" style="left:352.40px;top:252.18px;font-size:15.5px;transform:scaleX(1.0276);color:#201f1e;-webkit-text-stroke:.2px #201f1e;">Commodity</span>
<span class="t" style="left:355.20px;top:286.30px;font-size:15px;transform:scaleX(0.9977);color:#605e5c;">All</span>
<svg style="left:544.5px;top:288.5px" width="14" height="7.4" viewBox="0 0 14 7.4" ><path d="M0.4 0.4L7.0 6.800000000000001L13.6 0.4" fill="none" stroke="#605e5c" stroke-width="1.1"/></svg>
<svg style="left:549.4px;top:254.3px" width="12.8" height="6.6" viewBox="0 0 12.8 6.6" ><path d="M0.4 0.4L6.4 6.0L12.4 0.4" fill="none" stroke="#3b3a39" stroke-width="1.1"/></svg>
<div class="card" style="left:592px;top:244px;width:240px;height:78px"></div><svg style="left:0;top:0" width="900" height="320" viewBox="0 0 900 320"><rect x="603.8" y="277" width="216.6" height="29.4" fill="#fff" stroke="#dadada" stroke-width="1"/></svg><span class="t" style="left:606.34px;top:252.18px;font-size:15.5px;transform:scaleX(1.0600);color:#201f1e;-webkit-text-stroke:.2px #201f1e;">Location</span>
<span class="t" style="left:610.20px;top:286.30px;font-size:15px;transform:scaleX(0.9977);color:#605e5c;">All</span>
<svg style="left:799.5px;top:288.5px" width="14" height="7.4" viewBox="0 0 14 7.4" ><path d="M0.4 0.4L7.0 6.800000000000001L13.6 0.4" fill="none" stroke="#605e5c" stroke-width="1.1"/></svg>
<svg style="left:804.4px;top:254.3px" width="12.8" height="6.6" viewBox="0 0 12.8 6.6" ><path d="M0.4 0.4L6.4 6.0L12.4 0.4" fill="none" stroke="#3b3a39" stroke-width="1.1"/></svg>
<svg style="left:0;top:0" width="900" height="940" viewBox="0 0 900 940"><path d="M74 376H84V380H78V386H74Z" fill="#9c9c9c"/><path d="M852 376H842V380H848V386H852Z" fill="#9c9c9c"/><path d="M74 937H84V933H78V927H74Z" fill="#9c9c9c"/><path d="M852 937H842V933H848V927H852Z" fill="#9c9c9c"/><rect x="457" y="376" width="12" height="4" fill="#9c9c9c"/><rect x="457" y="933" width="12" height="4" fill="#9c9c9c"/><rect x="74" y="651" width="4" height="12" fill="#9c9c9c"/><rect x="848" y="651" width="4" height="12" fill="#9c9c9c"/><rect x="75.5" y="377.5" width="775" height="558" fill="none" stroke="#cdcdcd" stroke-width="1"/></svg>
<div class="a" style="left:59px;top:125px;width:2px;height:810px;background:linear-gradient(#383635 50%,rgba(0,0,0,0) 50%) 0 0/2px 4px"></div>
<div class="a" style="left:59px;top:936px;width:2px;height:2px;background:#383635"></div>
<div class="a" style="left:62px;top:936px;width:1441px;height:2px;background:linear-gradient(90deg,#383635 50%,rgba(0,0,0,0) 50%) 0 0/4px 2px"></div>
<svg style="left:0;top:0" width="900" height="400" viewBox="0 0 900 400"><path d="M774.8 358.5H789.8L783.8 366V371.3H780.8V366Z" fill="none" stroke="#6b6967" stroke-width="1" stroke-linejoin="round"/><path d="M809 360.5H803.5V371.5H816.5V366" fill="none" stroke="#6b6967" stroke-width="1"/><path d="M803.5 367.5H809.5V371.5" fill="none" stroke="#6b6967" stroke-width="1"/><path d="M810 367L816.5 360.5M811.5 360.5H816.5V365.5" fill="none" stroke="#6b6967" stroke-width="1"/><circle cx="832.1" cy="364.9" r="1.2" fill="#6b6967"/><circle cx="838.2" cy="364.9" r="1.2" fill="#6b6967"/><circle cx="844.3" cy="364.9" r="1.2" fill="#6b6967"/></svg>
<span class="t" style="left:87.70px;top:387.81px;font-size:14.4px;transform:scaleX(0.9884);">Code</span>
<span class="t" style="left:195.20px;top:387.81px;font-size:14.4px;transform:scaleX(0.9773);">Assessment</span>
<svg style="left:195px;top:404px" width="10" height="5"><path d="M0 0H10L5 5Z" fill="#1a1a1a"/></svg><div class="a" style="left:82px;top:413px;width:708px;height:1px;background:#2b90e0"></div><span class="t" style="left:87.60px;top:419.01px;font-size:14.4px;transform:scaleX(1.0335);">51204-1-5</span>
<span class="t" style="left:194.15px;top:419.01px;font-size:14.4px;transform:scaleX(1.0470);">Diammonium Phosphate, import spot price, cfr, India</span>
<div class="row" style="top:436.0px;height:22.5px"></div><span class="t" style="left:87.60px;top:441.51px;font-size:14.4px;transform:scaleX(1.0329);">4126399-1-5</span>
<span class="t" style="left:194.15px;top:441.51px;font-size:14.4px;transform:scaleX(1.0463);">Diammonium Phosphate, import spot price, cfr, Brazil (netforward from fob Saudi Arabia)</span>
<span class="t" style="left:87.60px;top:464.01px;font-size:14.4px;transform:scaleX(1.0335);">91201-1-5</span>
<span class="t" style="left:194.17px;top:464.01px;font-size:14.4px;transform:scaleX(1.0340);">Diammonium Phosphate, export spot price, fob, US Gulf</span>
<div class="row" style="top:481.0px;height:22.5px"></div><span class="t" style="left:87.60px;top:486.51px;font-size:14.4px;transform:scaleX(1.0352);">231097-1-5</span>
<span class="t" style="left:194.16px;top:486.51px;font-size:14.4px;transform:scaleX(1.0407);">Diammonium Phosphate, export spot price, fob, Saudi Arabia (netback from cfr India)</span>
<span class="t" style="left:86.54px;top:509.01px;font-size:14.4px;transform:scaleX(1.0598);">1124120-1-5</span>
<span class="t" style="left:194.16px;top:509.01px;font-size:14.4px;transform:scaleX(1.0372);">Diammonium Phosphate, export spot price, fob, Russia (netback from cfr India)</span>
<div class="row" style="top:526.0px;height:22.5px"></div><span class="t" style="left:87.60px;top:531.51px;font-size:14.4px;transform:scaleX(1.0335);">09205-1-5</span>
<span class="t" style="left:194.15px;top:531.51px;font-size:14.4px;transform:scaleX(1.0485);">Diammonium Phosphate, export spot price, fob, Morocco (netback from cfr India)</span>
<span class="t" style="left:86.54px;top:554.01px;font-size:14.4px;transform:scaleX(1.0598);">1516112-1-5</span>
<span class="t" style="left:194.16px;top:554.01px;font-size:14.4px;transform:scaleX(1.0447);">Diammonium Phosphate, domestic spot price, ddp, United Kingdom</span>
<div class="row" style="top:571.0px;height:22.5px"></div><span class="t" style="left:86.55px;top:576.51px;font-size:14.4px;transform:scaleX(1.0495);">18203-1-5</span>
<span class="t" style="left:194.17px;top:576.51px;font-size:14.4px;transform:scaleX(1.0318);">Diammonium Phosphate (granular), domestic spot price, exw, China</span>
<div class="a" style="left:0;top:0;width:1503px;height:936px;overflow:hidden"><div class="card" style="left:887px;top:299px;width:576px;height:127px"></div><div class="card" style="left:887px;top:464px;width:576px;height:198px"></div><div class="card" style="left:887px;top:701px;width:576px;height:222px"></div><span class="t" style="left:1013.38px;top:313.13px;font-size:15.2px;transform:scaleX(0.9215);font-weight:700;color:#1a1a1a;">Last Final</span>
<span class="t" style="left:983.49px;top:352.13px;font-size:15.2px;transform:scaleX(0.9073);font-weight:700;color:#1a1a1a;">Has Forecast?</span>
<span class="t" style="left:961.41px;top:393.13px;font-size:15.2px;transform:scaleX(0.8949);font-weight:700;color:#1a1a1a;">History Changed?</span>
<span class="t" style="left:964.79px;top:477.13px;font-size:15.2px;transform:scaleX(0.9104);font-weight:700;color:#1a1a1a;">Default Currency</span>
<span class="t" style="left:999.19px;top:530.13px;font-size:15.2px;transform:scaleX(0.9102);font-weight:700;color:#1a1a1a;">Default Unit</span>
<span class="t" style="left:942.20px;top:580.13px;font-size:15.2px;transform:scaleX(0.9012);font-weight:700;color:#1a1a1a;">Available Currencies</span>
<span class="t" style="left:979.90px;top:630.13px;font-size:15.2px;transform:scaleX(0.8974);font-weight:700;color:#1a1a1a;">Available Units</span>
<span class="t" style="left:1023.90px;top:723.13px;font-size:15.2px;transform:scaleX(0.9014);font-weight:700;color:#1a1a1a;">Industry</span>
<span class="t" style="left:914.00px;top:771.13px;font-size:15.2px;transform:scaleX(0.8885);font-weight:700;color:#1a1a1a;">Commodity Specification</span>
<span class="t" style="left:1029.26px;top:860.13px;font-size:15.2px;transform:scaleX(0.9409);font-weight:700;color:#1a1a1a;">Details</span>
</div><div class="a" style="left:168px;top:944px;width:99px;height:35px;background:#fff;border-left:1px solid #b3b0ad;border-right:1px solid #b3b0ad;box-sizing:border-box"></div>
<div class="a" style="left:169px;top:975px;width:97px;height:4px;background:#117865"></div>
<div class="a" style="left:267px;top:944px;width:302px;height:35px;background:#fff"></div>
<div class="a" style="left:341px;top:944px;width:1px;height:35px;background:#d2d0ce"></div>
<div class="a" style="left:468px;top:944px;width:1px;height:35px;background:#d2d0ce"></div>
<div class="a" style="left:569px;top:944px;width:39px;height:35px;background:#117865"></div>
<div class="a" style="left:51px;top:972px;width:24px;height:3px;border-radius:1.5px;background:#117865"></div>
<span class="t" style="left:189.10px;top:956.84px;font-size:12px;transform:scaleX(0.9863);-webkit-text-stroke:.25px;">Series Info</span>
<span class="t" style="left:287.80px;top:956.84px;font-size:12px;transform:scaleX(0.9106);">Values</span>
<span class="t" style="left:362.40px;top:956.84px;font-size:12px;transform:scaleX(0.9675);">Historical Values</span>
<span class="t" style="left:490.00px;top:956.84px;font-size:12px;transform:scaleX(0.9614);">Data Limits</span>
<svg style="left:0;top:0" width="700" height="980" viewBox="0 0 700 980"><rect x="53.85" y="951.9" width="17.25" height="10" rx="0.6" fill="#fff" stroke="#5c5a58" stroke-width="1.4"/><path d="M62.5 962.6V964.4M59.2 964.5H65.8" stroke="#5c5a58" stroke-width="1"/><rect x="101.65" y="949.8" width="10.75" height="18.3" rx="1" fill="#f9f8f7" stroke="#4a4846" stroke-width="1.2"/><path d="M105.7 965.8H108.4" stroke="#4a4846" stroke-width="1.4"/><path d="M139 958V966L134.6 962Z" fill="#c8c6c4"/><path d="M157 958V966L161.4 962Z" fill="#c8c6c4"/><path d="M588.4 955V966M582.9 960.5H594" stroke="#fff" stroke-width="3"/></svg>
</body></html>
